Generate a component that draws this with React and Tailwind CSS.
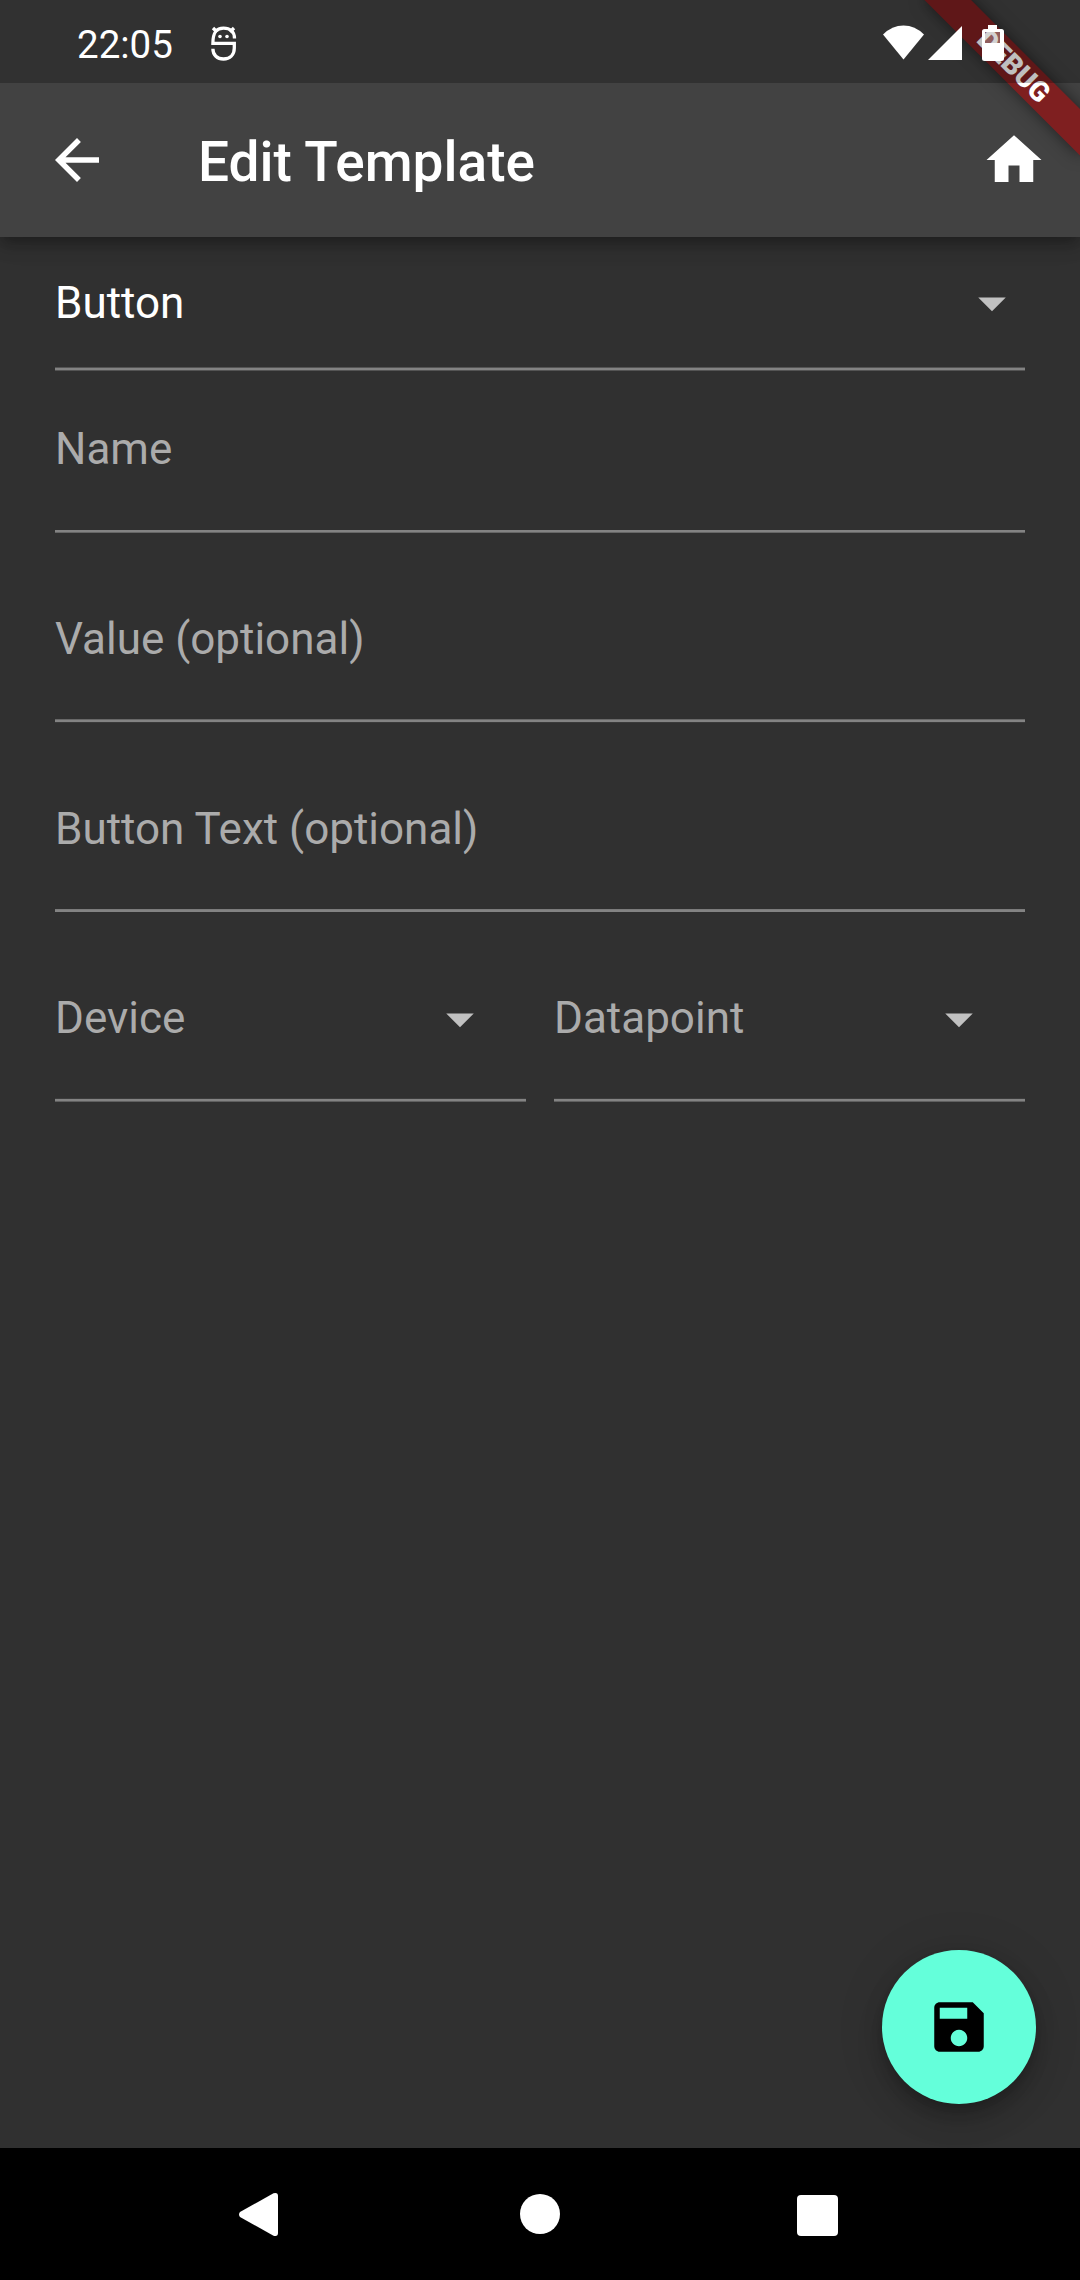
const Icon = ({ className, children, box = "0 0 24 24" }) => (
  <svg viewBox={box} className={className} fill="currentColor" aria-hidden="true">
    {children}
  </svg>
);

const Arrow = ({ inset }) => (
  <Icon className={`size-[66px] text-[#c1c1c1] ${inset ? "mr-[33px] mt-px" : ""}`}>
    <path d="M7 10l5 5 5-5z" />
  </Icon>
);

const edges = {
  both: "border-t-[#545454] border-b-[#545454]",
  bottom: "border-t-[#303030] border-b-[#666666]",
  top: "border-t-[#686868] border-b-[#3a3a3a]",
  full: "border-t-[#7b7b7b] border-b-[#303030]",
  low: "border-t-[#3c3c3c] border-b-[#606060]",
};

function Field({ label, value, select, inset, edge, className }) {
  return (
    <div className={`flex flex-col ${className}`}>
      <div className="flex h-[66px] items-center justify-between">
        <span className={`whitespace-nowrap text-[44px] leading-[52px] ${value ? "text-white" : "text-[#ababab]"}`}>
          {value || label}
        </span>
        {select && <Arrow inset={inset} />}
      </div>
      <div className={`mt-auto h-[4px] border-y bg-[#838383] ${edges[edge]}`} />
    </div>
  );
}

function StatusBar() {
  return (
    <div className="relative flex h-[83px] items-start bg-black/25 text-white">
      <span className="ml-[77px] mt-[21px] text-[38.5px] leading-[47px]">22:05</span>
      <svg className="absolute left-[210px] top-[25px] h-[37px] w-[27px]" viewBox="0 0 27 37" fill="none" stroke="currentColor" strokeWidth="3.3">
        <path d="M24.500 13.500C24.500 6.500 20 3.200 13.500 3.200S2.900 6.500 2.900 18.400H24.300V23c0 7-4.500 11-10.800 11S2.900 30 2.900 23.800" />
        <path d="M3 3l4 4M24 3l-4 4" />
        <circle cx="10" cy="11.500" r="1.800" fill="currentColor" stroke="none" />
        <circle cx="17" cy="11.500" r="1.800" fill="currentColor" stroke="none" />
      </svg>
      <svg className="absolute left-[882px] top-[24px] h-[38px] w-[122px]" viewBox="0 0 122 38" fill="currentColor">
        <path d="M1 10.500Q10 1.500 21.500 1.500T42 10.500L21.500 35.500z" />
        <path d="M80 2v34H46z" />
        <path fillOpacity=".3" d="M103 8h15v11h-15z" />
        <path fillRule="evenodd" d="M106 1h9v4h4.500a2.500 2.500 0 0 1 2.500 2.500V34.500a2.500 2.500 0 0 1-2.500 2.500H102.500a2.500 2.500 0 0 1-2.500-2.500V7.500A2.500 2.500 0 0 1 102.500 5H106zM103 8v11h15V8z" />
      </svg>
    </div>
  );
}

export default function App() {
  return (
    <div className="relative flex h-[2280px] w-[1080px] flex-col overflow-hidden bg-[#303030] font-[Roboto,sans-serif]">
      <header className="relative z-10 bg-[#424242] shadow-[0_5px_11px_-3px_rgba(0,0,0,0.2),0_11px_14px_rgba(0,0,0,0.14),0_3px_27px_rgba(0,0,0,0.12)]">
        <div className="absolute right-0 top-0 size-[237px] overflow-hidden">
          <div className="absolute -right-[110px] top-[77px] flex h-[33px] w-[220px] origin-[110px_-77px] rotate-45 items-center justify-center bg-[#7f1f20] text-[28px] font-black leading-[33px] text-white shadow-[0_0_16px_rgba(0,0,0,0.5)]">
            DEBUG
          </div>
        </div>
        <StatusBar />
        <div className="flex h-[154px] items-center pl-[44px] pr-[33px] text-white">
          <Icon className="size-[66px]">
            <path d="M20 11H7.830l5.590-5.590L12 4l-8 8 8 8 1.410-1.410L7.830 13H20v-2z" />
          </Icon>
          <h1 className="ml-[88px] mt-[3px] grow text-[55px] font-medium leading-[64px]">Edit Template</h1>
          <Icon className="size-[66px]">
            <path d="M10 20v-6h4v6h5v-8h3L12 3 2 12h3v8z" />
          </Icon>
        </div>
      </header>
      <main className="flex grow flex-col px-[55px] pt-[33px]">
        <Field value="Button" select edge="both" className="h-[101px]" />
        <Field label="Name" edge="bottom" className="mt-[45px] h-[117px]" />
        <Field label="Value (optional)" edge="top" className="mt-[73px] h-[117px]" />
        <Field label="Button Text (optional)" edge="full" className="mt-[73px] h-[117px]" />
        <div className="mt-[72px] grid grid-cols-2 gap-[28px]">
          <Field label="Device" select inset edge="low" className="h-[117px]" />
          <Field label="Datapoint" select inset edge="low" className="h-[117px]" />
        </div>
        <button className="mb-[44px] -mr-[11px] mt-auto flex size-[154px] items-center justify-center self-end rounded-full bg-[#64ffda] text-black shadow-[0_8px_14px_-3px_rgba(0,0,0,0.2),0_17px_28px_rgba(0,0,0,0.14),0_3px_50px_rgba(0,0,0,0.12)]">
          <Icon className="size-[66px]">
            <path d="M17 3H5c-1.110 0-2 .9-2 2v14c0 1.100.89 2 2 2h14c1.100 0 2-.9 2-2V7l-4-4zm-5 16c-1.660 0-3-1.340-3-3s1.340-3 3-3 3 1.340 3 3-1.340 3-3 3zm3-10H5V5h10v4z" />
          </Icon>
        </button>
      </main>
      <nav className="flex h-[132px] items-center bg-black pl-[239px] text-white">
        <svg className="h-[45px] w-[39px]" viewBox="0 0 39 46" preserveAspectRatio="none" fill="currentColor">
          <path d="M1 20.500L34.500 1.300Q39 0 39 4V42Q39 46 34.500 44.700L1 25.500Q-1 23 1 20.500z" />
        </svg>
        <div className="ml-[242px] size-[40px] rounded-full bg-white" />
        <div className="ml-[237px] mt-[2px] size-[41px] rounded-[4px] bg-white" />
      </nav>
    </div>
  );
}
